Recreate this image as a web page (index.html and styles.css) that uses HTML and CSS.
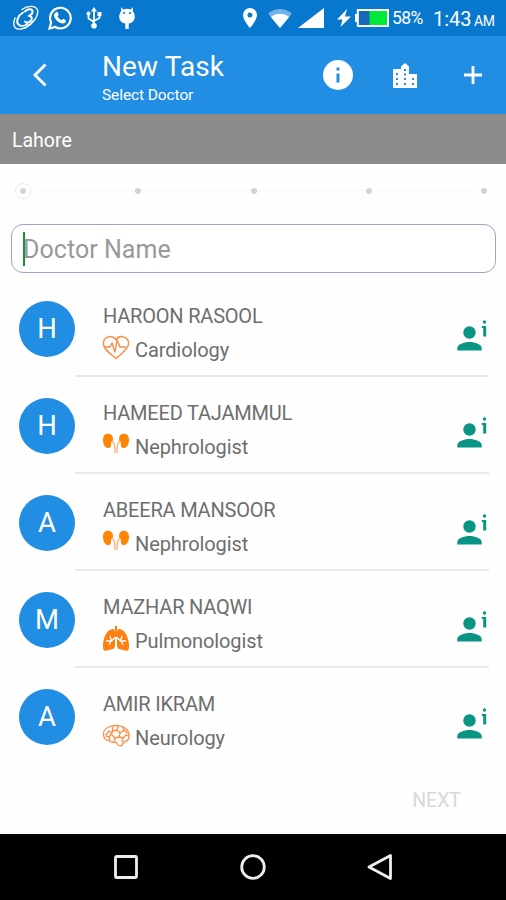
FILE: index.html
```html
<!DOCTYPE html>
<html lang="en">
<head>
<meta charset="utf-8">
<title>New Task</title>
<link rel="stylesheet" href="styles.css">
</head>
<body>
<svg class="defs" width="0" height="0" aria-hidden="true">
  <symbol id="heart" viewBox="0 0 28 26"><g fill="none" stroke="#ff8a42" stroke-width="1.400" stroke-linejoin="round"><path d="M14 4.500C9-1 1 2 1.500 9c0 5 6 9 12.500 14.500C20 18 26.500 14 26.500 9 27 2 18-1 14 4.500z"/><path d="M3 12h5l2-4 3 9 2-12 3 7h6"/></g></symbol>
  <symbol id="kidneys" viewBox="0 0 28 26"><path fill="#ff8505" d="M8 2C3 1 1 4 1 8c0 4 2 8 5 8 3 0 3-2 3-4 0-2 2-2 2-5 0-2-1-4.500-3-5zM20 2c5-1 7 2 7 6 0 4-2 8-5 8-3 0-3-2-3-4 0-2-2-2-2-5 0-2 1-4.500 3-5z"/><path fill="none" stroke="#ffb98a" stroke-width="1.500" d="M9 10c3-1 4 2 4 11M19 10c-3-1-4 2-4 11"/></symbol>
  <symbol id="lungs" viewBox="0 0 28 26"><path fill="#ff7f11" d="M11 3C5 3 1 12 1 20c0 6 2 5 6 4s6-1 6-5V7c0-2-.5-4-2-4zM17 3c6 0 10 9 10 17 0 6-2 5-6 4s-6-1-6-5V7c0-2 .5-4 2-4z"/><path stroke="#ff7f11" stroke-width="2" d="M14 0v11"/><path fill="none" stroke="#fff" stroke-width="1.300" d="M13.500 11l-4 4H4m5 0-2 4M8 10l1.500 5M14.500 11l4 4H24m-5 0 2 4M20 10l-1.500 5"/></symbol>
  <symbol id="brain" viewBox="0 0 28 26"><g fill="none" stroke="#ff8a42" stroke-width="1.300" stroke-linecap="round" stroke-linejoin="round"><path d="M1.500 12C1 8 4 5 7 4c4-2 10-2 14 0 4 1.500 6 5 6 9 0 3-1.500 5-4 5.500L19 23l-3-1-2-3c-3 .5-6 0-7-1.500-3 0-5-2.500-5.500-5.500z"/><path d="M4 12l3-4 3 2 1-6m-1 6-3 4-3-1m3 1 1 3m3-9 4-1 1-4m-1 4 3 3 4-3-1-3m1 3 3 3m-7 0-1 4-4 1-3-3m3 3-1 3m5-4 4 1 3-3 3 1m-6 2-1 4"/></g></symbol>
  <symbol id="person" viewBox="0 0 30 32"><g fill="#0a9484"><circle cx="12.500" cy="12.500" r="6.200"/><path d="M.3 30.500v-2.300C.3 24.300 7 22 12.500 22s12.200 2.300 12.200 6.200v2.300z"/><circle cx="27.500" cy="2" r="1.700"/><path d="M24.800 6h4.400v10.500h-3V8h-1.400z"/></g></symbol>
</svg>
<div class="screen">
  <header class="status">
    <svg class="st-swirl" viewBox="0 0 26 26" fill="none" stroke="#fff" stroke-linecap="round"><path stroke-width="1.400" d="M9 4.500C15 0 23 .5 24.500 5c1.500 6-5 14-12 18M2 13c-3 8 0 12 6 11 5-1 9-4 12-8"/><path stroke-width="2" d="M12 6.500c3-3 8-3 7.500.5-.3 2-2.500 3.500-4.500 4 4-.5 5 2.500 2.500 5-2 2-4.500 2-5.500.5M10 7.500c-5 3-7.500 9-4.500 12 2 2 6 1.500 9-.5"/></svg>
    <svg class="st-chat" viewBox="0 0 24 24"><path fill="none" stroke="#fff" stroke-width="2.200" d="M1.500 22.500l1.600-6A10.300 10.300 0 1 1 7.300 21z"/><path fill="#fff" d="M8 6.200c.8-.6 1.500-.4 1.800.4l.8 2c.2.600-.8 1.400-1 1.800.9 1.800 2.200 3 4 3.800.5-.2 1.200-1.500 1.800-1.300l2.100 1c.7.400.4 1.800-.2 2.500-1.300 1.300-3 1.300-4.800.6-3-1.200-5.200-3.300-6.300-6.300C5.600 9 6.300 7.200 8 6.200z"/></svg>
    <svg class="st-usb" viewBox="0 0 16 22"><path fill="none" stroke="#fff" stroke-width="1.800" d="M8 3v16M2.500 7v4.500L8 15M13.500 7v4L8 14"/><path fill="#fff" d="M8 0l3 4.500H5z"/><circle cx="2.500" cy="6.500" r="2" fill="#fff"/><path fill="#fff" d="M11.500 5h4v4h-4z"/><circle cx="8" cy="18.700" r="2.800" fill="#fff"/></svg>
    <svg class="st-bug" viewBox="0 0 16 22"><path fill="#fff" d="M2 0l2.300 2.500C6.500 1.600 9.500 1.600 11.700 2.500L14 0l-.3 4c.8 1.200 2.100 3 2.100 5.500 0 4-2.300 6.500-6.100 7V22H6.300v-5.500c-3.800-.5-6.100-3-6.100-7C.2 7 1.500 5.200 2.300 4z"/><circle cx="5" cy="6" r="1.100" fill="#0878cf"/><circle cx="11" cy="6" r="1.100" fill="#0878cf"/></svg>
    <svg class="st-pin" viewBox="0 0 14 20"><path fill="#fff" fill-rule="evenodd" d="M7 0a7 7 0 0 1 7 7c0 5-7 13-7 13S0 12 0 7a7 7 0 0 1 7-7zm0 4.500a2.500 2.500 0 1 0 0 5 2.500 2.500 0 0 0 0-5z"/></svg>
    <svg class="st-wifi" viewBox="0 0 24 19"><path fill="#71b3e6" d="M0 4.500C7-1.500 17-1.500 24 4.500L12 19z"/><path fill="#fff" d="M2.800 8C8 3.500 16 3.500 21.200 8L12 19z"/></svg>
    <svg class="st-signal" viewBox="0 0 26 20"><path fill="#fff" d="M26 0v20H0z"/></svg>
    <svg class="st-bolt" viewBox="0 0 14 18"><path fill="#fff" d="M10 0L0 10.500h5.500L3.500 18 14 7.500H8z"/></svg>
    <svg class="st-battery" viewBox="0 0 34 18"><path fill="#fff" d="M0 5h2v8H0z"/><rect x="2.800" y="1" width="30.200" height="16" fill="#1769b5" stroke="#fff" stroke-width="2"/><path fill="#00e83a" d="M14.500 2H32v14H14.500z"/></svg>
    <span class="percent">58%</span>
    <span class="time">1:43</span><span class="ampm">AM</span>
  </header>
  <div class="appbar">
    <svg class="back" viewBox="0 0 14 24"><path fill="none" stroke="#fff" stroke-width="2.900" d="M12.500 1.500L2 12l10.500 10.500"/></svg>
    <div class="titles"><h1>New Task</h1><p>Select Doctor</p></div>
    <svg class="info" viewBox="0 0 30 30"><circle cx="15" cy="15" r="15" fill="#fff"/><path fill="#218de3" d="M13.500 7.500h3v3h-3zM13.500 13.500h3v9h-3z"/></svg>
    <svg class="city" viewBox="0 0 24 25"><path fill="#fff" fill-rule="evenodd" d="M0 6h8V3.500L12 0l4 3.500V11h8v14H0zm3 4v2h2v-2zm0 5v2h2v-2zm0 5v2h2v-2zm8-14v2h2V6zm0 4.500v2h2v-2zm0 4.500v2h2v-2zm0 5v2h2v-2zm8-5v2h2v-2zm0 5v2h2v-2z"/></svg>
    <svg class="plus" viewBox="0 0 18 18"><path stroke="#fff" stroke-width="2.800" d="M9 0v18M0 9h18"/></svg>
  </div>
  <div class="city-name">Lahore</div>
  <div class="steps"><i class="step current"></i><i class="step"></i><i class="step"></i><i class="step"></i><i class="step"></i></div>
  <div class="search"><span class="caret"></span><span>Doctor Name</span></div>
  <main class="list">
    <article class="row"><div class="avatar">H</div><div class="body"><div class="text"><h2>HAROON RASOOL</h2><p><svg><use href="#heart"/></svg>Cardiology</p></div><svg class="person"><use href="#person"/></svg></div></article>
    <article class="row"><div class="avatar">H</div><div class="body"><div class="text"><h2>HAMEED TAJAMMUL</h2><p><svg><use href="#kidneys"/></svg>Nephrologist</p></div><svg class="person"><use href="#person"/></svg></div></article>
    <article class="row"><div class="avatar">A</div><div class="body"><div class="text"><h2>ABEERA MANSOOR</h2><p><svg><use href="#kidneys"/></svg>Nephrologist</p></div><svg class="person"><use href="#person"/></svg></div></article>
    <article class="row"><div class="avatar">M</div><div class="body"><div class="text"><h2>MAZHAR NAQWI</h2><p><svg><use href="#lungs"/></svg>Pulmonologist</p></div><svg class="person"><use href="#person"/></svg></div></article>
    <article class="row"><div class="avatar">A</div><div class="body"><div class="text"><h2>AMIR IKRAM</h2><p><svg><use href="#brain"/></svg>Neurology</p></div><svg class="person"><use href="#person"/></svg></div></article>
  </main>
  <div class="next">NEXT</div>
  <nav class="nav">
    <svg viewBox="0 0 26 26"><rect x="2.500" y="2.500" width="21" height="21" rx="1" /></svg>
    <svg viewBox="0 0 26 26"><circle cx="13" cy="13" r="11.300"/></svg>
    <svg viewBox="0 0 26 26"><path d="M23.500 1.500v23L2 13z"/></svg>
  </nav>
</div>
</body>
</html>
```
FILE: styles.css
```css
* { box-sizing: border-box; margin: 0; padding: 0; }
body { font-family: Roboto, sans-serif; background: #fff; }
svg { display: block; flex: none; }
.defs { position: absolute; }
.screen { width: 506px; height: 900px; display: flex; flex-direction: column; overflow: hidden; background: #fefefe; }
.screen > * { flex: none; }

.status { height: 36px; display: flex; align-items: center; background: #0878cf; color: #fff; white-space: nowrap; }
.st-swirl { width: 26px; height: 26px; margin-left: 13px; }
.st-chat { width: 24px; height: 24px; margin-left: 9px; }
.st-usb { width: 16px; height: 22px; margin-left: 14px; }
.st-bug { width: 16px; height: 22px; margin-left: 17px; }
.st-pin { width: 14px; height: 20px; margin-left: 108px; }
.st-wifi { width: 24px; height: 19px; margin-left: 11px; }
.st-signal { width: 26px; height: 20px; margin-left: 6px; }
.st-bolt { width: 14px; height: 18px; margin-left: 13px; }
.st-battery { width: 34px; height: 18px; margin-left: 4px; }
.percent { width: 41px; margin-left: 3px; font-size: 17.500px; letter-spacing: -.6px; }
.time { width: 41px; font-size: 20px; padding-top: 2px; }
.ampm { font-size: 14px; padding-top: 6px; letter-spacing: -.5px; }

.appbar { height: 78px; display: flex; align-items: center; background: #218de3; color: #fff; }
.back { width: 14px; height: 24px; margin-left: 33px; }
.titles { width: 221px; margin-left: 55px; padding-top: 4px; }
.titles h1 { font-size: 28px; font-weight: 400; line-height: 34px; letter-spacing: .1px; }
.titles p { font-size: 15.500px; line-height: 20px; padding-top: 1px; letter-spacing: -.1px; }
.info { width: 30px; height: 30px; }
.city { width: 24px; height: 25px; margin-left: 40px; }
.plus { width: 18px; height: 18px; margin-left: 47px; }

.city-name { height: 50px; padding-left: 12px; font-size: 19.500px; line-height: 53px; color: #fff; background: #8b8b8b; }

.steps { height: 60px; display: flex; justify-content: space-between; align-items: center; padding: 0 19px 7px 15px; background: linear-gradient(#f8f8f8, #f8f8f8) 38px 26px / 440px 1px no-repeat; }
.step { width: 6px; height: 6px; border-radius: 50%; background: #d3d3d3; }
.step.current { width: 16px; height: 16px; margin-right: -5px; border: 1px solid #ececec; background: radial-gradient(circle, #d3d3d3 2.500px, #fff 3.500px); }

.search { height: 49px; margin: 0 10px 0 11px; padding-left: 11px; display: flex; align-items: center; border: 1.500px solid #9da4c8; border-radius: 12px; font-size: 25px; color: #999; background: #fff; }
.caret { width: 2px; height: 34px; margin-right: -2px; background: #119335; }
.search span:last-child { padding-top: 2px; letter-spacing: .05px; }

.list { margin-top: 7px; }
.row { height: 97px; display: flex; padding: 0 17px 0 19px; }
.avatar { width: 56px; height: 56px; margin-top: 21px; border-radius: 50%; background: #218de3; color: #fff; font-size: 27.500px; line-height: 56px; text-align: center; flex: none; }
.body { flex: 1; display: flex; justify-content: space-between; padding: 23px 2px 0 28px; border-bottom: 2px solid #e9e9e9; }
.row:last-child .body { border-color: transparent; }
.text { color: #6e6e6e; }
.text h2 { font-size: 20px; font-weight: 400; line-height: 26px; letter-spacing: -.2px; }
.text p { display: flex; align-items: center; font-size: 20px; line-height: 26px; margin-top: 8px; letter-spacing: -.1px; }
.text svg { width: 28px; height: 26px; margin: -4px 5px 0 -1px; }
.person { width: 30px; height: 32px; margin-top: 17px; }

.next { height: 68.500px; padding: 24px 45px 0 0; font-size: 19.500px; line-height: 24px; text-align: right; color: #d9d9d9; }
.nav { height: 67.500px; display: flex; justify-content: center; align-items: center; gap: 101px; background: #000; }
.nav svg { width: 26px; height: 26px; fill: none; stroke: #eee; stroke-width: 2.800; stroke-linejoin: round; }
```
